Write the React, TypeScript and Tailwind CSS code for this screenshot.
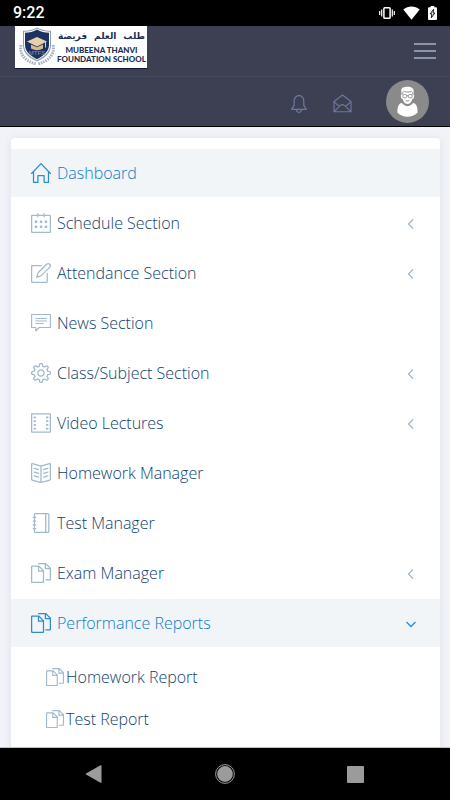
import type { ComponentType } from "react";
import {
  SlHome,
  SlCalender,
  SlNote,
  SlSettings,
  SlFilm,
  SlBookOpen,
  SlNotebook,
  SlDocs,
  SlBell,
} from "react-icons/sl";

type Icon = ComponentType<{ className?: string }>;
type Item = { label: string; icon: Icon; arrow?: "left" | "down"; active?: boolean };

function BubbleLines({ className }: { className?: string }) {
  return (
    <svg viewBox="0 0 20 20" className={className} fill="none" stroke="currentColor" strokeWidth="1.1" aria-hidden="true">
      <path d="M.6 1.500h18.800v13H8.200L4.800 18v-3.500H.6z" strokeLinejoin="round" />
      <path d="M4.500 5.500h11.500M4.500 8h11.500M4.500 10.500h8" />
    </svg>
  );
}

const items: Item[] = [
  { label: "Dashboard", icon: SlHome, active: true },
  { label: "Schedule Section", icon: SlCalender, arrow: "left" },
  { label: "Attendance Section", icon: SlNote, arrow: "left" },
  { label: "News Section", icon: BubbleLines },
  { label: "Class/Subject Section", icon: SlSettings, arrow: "left" },
  { label: "Video Lectures", icon: SlFilm, arrow: "left" },
  { label: "Homework Manager", icon: SlBookOpen },
  { label: "Test Manager", icon: SlNotebook },
  { label: "Exam Manager", icon: SlDocs, arrow: "left" },
  { label: "Performance Reports", icon: SlDocs, arrow: "down", active: true },
];

const reports = ["Homework Report", "Test Report"];

function StatusBar() {
  return (
    <div className="flex h-[26px] shrink-0 items-center justify-between bg-black px-[13px] text-white">
      <span className="font-['Roboto',sans-serif] text-base font-medium">9:22</span>
      <div className="flex items-center gap-2">
        <svg width="16" height="14" viewBox="0 0 16 14" fill="none" stroke="white" aria-hidden="true">
          <rect x="4.900" y="1.700" width="6.200" height="10.600" rx="0.800" strokeWidth="1.500" />
          <path d="M2.700 3.500v7M13.300 3.500v7M0.700 5v4M15.300 5v4" strokeWidth="1.200" />
        </svg>
        <svg width="17" height="14" viewBox="0 0 17 14" fill="white" aria-hidden="true">
          <path d="M0.300 3.600C5-.6 12-.6 16.700 3.600L8.500 13.800z" />
        </svg>
        <svg width="9" height="14" viewBox="0 0 9 14" aria-hidden="true">
          <path d="M2.700 0h3.600v1.200H8q1 0 1 1V13q0 1-1 1H1q-1 0-1-1V2.200q0-1 1-1h1.700z" fill="white" />
          <path d="M5.600 3.300 2.200 7.800h1.700L3.400 11.700 6.800 7H5.100z" fill="white" stroke="black" strokeWidth="0.900" />
        </svg>
      </div>
    </div>
  );
}

function Logo() {
  return (
    <a href="#home" className="ml-[15px] flex h-[43px] w-[132px] items-start justify-between border-b border-[#14182f] bg-white px-[2px] text-[#1b3055]">
      <svg width="40" height="40" viewBox="1 0 40 40" className="shrink-0" aria-hidden="true">
        <path d="M5 19C3 28 9 35 20 38M37 19c2 9-4 16-15 19" fill="none" stroke="#a5aebd" strokeWidth="3" strokeDasharray="1.500 1" />
        <path d="M21 1.500c-4 2.500-9 3.300-14 3.300V19c0 8 6 13 14 16.500C29 32 35 27 35 19V4.800c-5 0-10-.8-14-3.300z" fill="#8d99ad" />
        <path d="M21 2.600c-4 2.300-8.500 3.100-13 3.200V19c0 7 6 11.700 13 15.200C28 30.700 34 26 34 19V5.800C29.500 5.700 25 4.900 21 2.600z" fill="#fff" />
        <path d="M21 3.600c-4 2.300-7.500 3.100-12 3.200V19c0 6.500 5.500 11 12 14.200C27.500 30 33 25.500 33 19V6.800C28.500 6.700 25 5.900 21 3.600z" fill="#1d3260" />
        <path d="m21 11 10 4.500-10 5-10-5z" fill="#ead0aa" />
        <path d="M15 18.500v4q6 3.500 12 0v-4L21 21.300z" fill="#d9b98d" />
        <path d="M29.500 15.500v6" stroke="#ead0aa" />
        <text x="21" y="29" textAnchor="middle" fontSize="6" fill="#8796b2" fontFamily="Liberation Sans, sans-serif">MTFS</text>
      </svg>
      <span className="flex flex-col items-center whitespace-nowrap font-['Lato',sans-serif] text-[8px] font-black leading-[9px]">
        <span dir="rtl" lang="ar" className="flex h-[20px] items-center gap-[7px] font-['DejaVu_Sans',sans-serif] text-[9px] font-bold leading-[20px]">
          <span>طلب</span>
          <span>العلم</span>
          <span>فريضة</span>
        </span>
        <span>MUBEENA THANVI</span>
        <span>FOUNDATION SCHOOL</span>
      </span>
    </a>
  );
}

function Avatar() {
  return (
    <svg width="43" height="43" viewBox="0 0 43 43" aria-hidden="true">
      <circle cx="21.500" cy="21.500" r="21.500" fill="#8a8a8a" />
      <path d="M16 23c-3.500.3-4.600 4-4.600 9.500q4.500 4.300 10.100 4.300t10.100-4.300c0-5.500-1.100-9.200-4.600-9.500q-5.500 6-11 0z" fill="white" />
      <path d="M15.300 10.500c-.5-3 3-3.800 6.200-3.800 4 0 6.500 1.600 6.200 5l-.3 3.300.9.200-.6 3.300-1.200.3q-1.500 5.200-5 5.200t-5-5.200l-1.200-.3-.6-3.300.9-.2z" fill="white" />
      <path d="M16.700 14.500c-.4-2 .5-3 1.500-3 2.500.8 5 .8 7.500 0 .8.500 1 1.500.8 3" fill="none" stroke="#8a8a8a" strokeWidth="0.900" />
      <g fill="none" stroke="#8a8a8a" strokeWidth="0.900">
        <rect x="16.800" y="14.500" width="4" height="3.300" rx="1.400" />
        <rect x="22.300" y="14.500" width="4" height="3.300" rx="1.400" />
        <path d="M20.800 15.700h1.500M19.700 20.500q1.800 1 3.600 0M16.300 22.800q5.200 5.800 10.400 0" />
      </g>
    </svg>
  );
}

function Header() {
  return (
    <header className="shrink-0 border-b border-black bg-[#3d3f53]">
      <div className="flex h-[51px] items-start justify-between border-b border-[#464a5d]">
        <Logo />
        <button type="button" aria-label="Toggle menu" className="mr-[14px] mt-[17px] flex w-[22px] flex-col gap-[5px]">
          <span className="h-[2px] bg-[#8d93ab]" />
          <span className="h-[2px] bg-[#8d93ab]" />
          <span className="h-[2px] bg-[#8d93ab]" />
        </button>
      </div>
      <div className="flex h-[49px] items-center justify-end pr-[21px] text-[#71789d]">
        <button type="button" aria-label="Notifications" className="mt-1 mr-[25px]">
          <SlBell className="size-[18px]" />
        </button>
        <button type="button" aria-label="Messages" className="mt-1 mr-[34px]">
          <svg width="19" height="19" viewBox="0 0 19 19" fill="none" stroke="currentColor" strokeWidth="1.100" strokeLinejoin="round" aria-hidden="true">
            <path d="M1 7.500 9.500 1 18 7.500v10.300H1zM1.200 7.800l5.300 4.700M17.800 7.800l-5.300 4.700M1.300 17.500l6-5.800q2.200-2 4.400 0l6 5.800" />
          </svg>
        </button>
        <button type="button" aria-label="Account">
          <Avatar />
        </button>
      </div>
    </header>
  );
}

function Arrow({ direction }: { direction: "left" | "down" }) {
  return (
    <svg width="12" height="12" viewBox="0 0 12 12" fill="none" stroke="currentColor" strokeWidth="1.300" aria-hidden="true">
      <path d={direction === "left" ? "M9 2.500 4.500 7 9 11.500" : "M2.500 5 7 9.500 11.500 5"} />
    </svg>
  );
}

function MenuRow({ label, icon: RowIcon, arrow, active }: Item) {
  return (
    <li>
      <a
        href="#section"
        className={`flex h-12 items-center pl-5 pr-6 ${active ? "bg-[#f1f5f8] text-[#2d8bcf]" : "text-[#a0b9cb]"}`}
      >
        <RowIcon className="size-5 shrink-0" />
        <span className={`ml-[6px] grow ${active ? "text-[#0f7cc9]" : "text-[#0f4270]"}`}>{label}</span>
        {arrow && <Arrow direction={arrow} />}
      </a>
    </li>
  );
}

function Navigation() {
  return (
    <nav className="ml-[11px] mr-[10px] mt-[11px] rounded bg-white pb-10 pt-[11px] text-base font-light shadow-[0_1px_8px_rgba(60,70,110,0.1)]">
      <ul className="flex flex-col gap-[2px]">
        {items.map((item) => (
          <MenuRow key={item.label} {...item} />
        ))}
      </ul>
      <ul className="mt-[9px]">
        {reports.map((label) => (
          <li key={label}>
            <a href="#report" className="flex h-[42px] items-center gap-[2px] pl-[35px] text-[#a0b9cb]">
              <SlDocs className="size-[18px]" />
              <span className="text-[#0f4270]">{label}</span>
            </a>
          </li>
        ))}
      </ul>
    </nav>
  );
}

function SystemBar() {
  return (
    <div className="flex h-[53px] shrink-0 items-center justify-around border-t border-[#bfbfbf] bg-black px-[29px] text-[#9b9b9b]">
      <button type="button" aria-label="Back" className="flex w-5 justify-center">
        <svg width="18" height="18" viewBox="0 0 18 18" fill="currentColor" aria-hidden="true">
          <path d="M16.500.3v17.400q-.5.300-1 0L1 9.500q-.5-.5 0-1L15.500.3q.5-.3 1 0z" />
        </svg>
      </button>
      <button type="button" aria-label="Home">
        <svg width="20" height="20" viewBox="0 0 20 20" aria-hidden="true">
          <circle cx="10" cy="10" r="9.400" fill="none" stroke="currentColor" strokeWidth="1" />
          <circle cx="10" cy="10" r="7.900" fill="currentColor" />
        </svg>
      </button>
      <button type="button" aria-label="Recent apps" className="flex w-5 justify-center">
        <span className="block size-[17px] rounded-[1px] bg-[#9b9b9b]" />
      </button>
    </div>
  );
}

export default function App() {
  return (
    <div className="flex h-screen flex-col overflow-hidden bg-[#f2f3f8] font-['Open_Sans',sans-serif]">
      <StatusBar />
      <Header />
      <main className="min-h-0 grow overflow-hidden">
        <Navigation />
      </main>
      <SystemBar />
    </div>
  );
}
